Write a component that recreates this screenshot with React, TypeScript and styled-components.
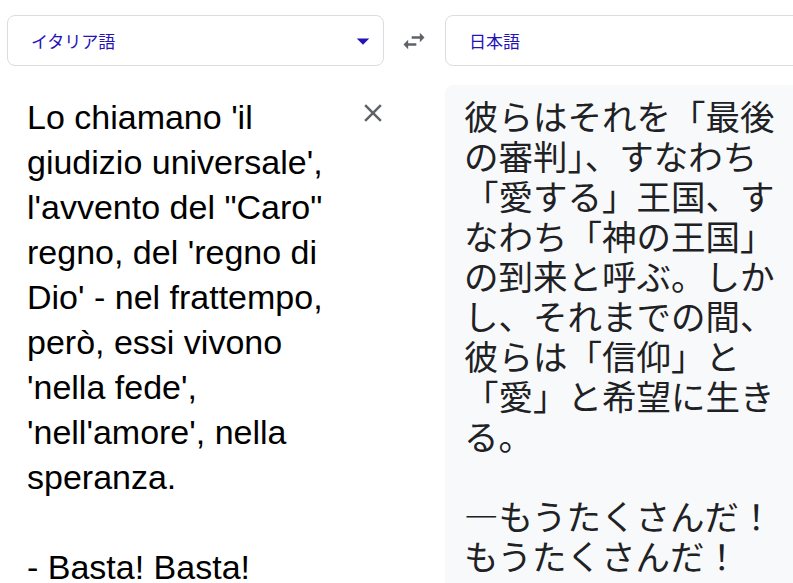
import React from "react";
import styled, { createGlobalStyle } from "styled-components";

const GlobalStyle = createGlobalStyle`
  html, body {
    margin: 0;
    padding: 0;
    background: #fff;
    overflow: hidden;
  }
`;

const sourceText =
  "Lo chiamano 'il giudizio universale', l'avvento del \"Caro\" regno, del 'regno di Dio' - nel frattempo, però, essi vivono 'nella fede', 'nell'amore', nella speranza.\n\n- Basta! Basta!";

const targetText =
  "彼らはそれを「最後の審判」、すなわち「愛する」王国、すなわち「神の王国」の到来と呼ぶ。しかし、それまでの間、彼らは「信仰」と「愛」と希望に生きる。\n\n―もうたくさんだ！もうたくさんだ！";

const App = () => {
  return (
    <Page>
      <GlobalStyle />
      <LangBar>
        <LangBox>
          <LangName>イタリア語</LangName>
          <DropArrow viewBox="0 0 24 24">
            <path d="M7 10l5 5 5-5z" />
          </DropArrow>
        </LangBox>
        <SwapButton>
          <svg viewBox="0 0 24 24" width="28" height="28">
            <path d="M6.99 11L3 15l3.99 4v-3H14v-2H6.99v-3zM21 9l-3.99-4v3H10v2h7.01v3L21 9z" />
          </svg>
        </SwapButton>
        <LangBox>
          <LangName>日本語</LangName>
        </LangBox>
      </LangBar>
      <Panels>
        <SourcePanel>
          <SourceText>{sourceText}</SourceText>
          <ClearButton>
            <svg viewBox="0 0 24 24" width="30" height="30">
              <path d="M19 6.41L17.59 5 12 10.59 6.41 5 5 6.41 10.59 12 5 17.59 6.41 19 12 13.41 17.59 19 19 17.59 13.41 12z" />
            </svg>
          </ClearButton>
        </SourcePanel>
        <TargetPanel>
          <TargetText>{targetText}</TargetText>
        </TargetPanel>
      </Panels>
    </Page>
  );
};

export default App;

const Page = styled.div`
  width: 800px;
  padding: 15px 0 0 7px;
  font-family: "Liberation Sans", Arial, sans-serif;
`;

const LangBar = styled.div`
  display: grid;
  grid-template-columns: 377px 61px 362px;
  height: 51px;
`;

const LangBox = styled.div`
  display: flex;
  align-items: center;
  justify-content: space-between;
  border: 1px solid #dadce0;
  border-radius: 8px;
  padding: 0 5px 0 23px;
`;

const LangName = styled.span`
  font-family: "Noto Sans CJK JP", "Noto Sans", sans-serif;
  font-size: 17px;
  color: #2513b8;
`;

const DropArrow = styled.svg`
  width: 30px;
  height: 30px;
  fill: #2513b8;
`;

const SwapButton = styled.div`
  display: flex;
  align-items: center;
  justify-content: center;
  fill: #5f6368;
  padding-right: 1px;
`;

const Panels = styled.div`
  display: grid;
  grid-template-columns: 438px 362px;
  margin-top: 19px;
  height: 520px;
`;

const SourcePanel = styled.div`
  display: flex;
  align-items: flex-start;
  gap: 10px;
  padding: 10px 0 0 20px;
`;

const SourceText = styled.div`
  width: 321px;
  flex-shrink: 0;
  white-space: pre-wrap;
  font-size: 34px;
  line-height: 45px;
  color: #000;
`;

const ClearButton = styled.div`
  display: flex;
  margin-top: 3px;
  fill: #5f6368;
`;

const TargetPanel = styled.div`
  background: #f8f9fa;
  border-radius: 8px 0 0 0;
  padding: 10px 19px 0 19px;
`;

const TargetText = styled.div`
  width: 324px;
  white-space: pre-wrap;
  font-family: "Noto Sans CJK JP", sans-serif;
  font-size: 34.5px;
  line-height: 40px;
  color: #202124;
`;
